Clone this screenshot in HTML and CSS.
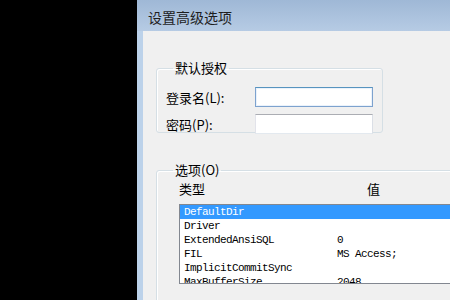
FILE: index.html
```html
<!DOCTYPE html>
<html lang="zh-CN">
<head>
  <meta charset="UTF-8" />
  <title>设置高级选项</title>
  <link rel="stylesheet" href="styles.css">
</head>
<body>
  <div class="window">
    <div class="titlebar">设置高级选项</div>
    <div class="frame">
      <div class="client">

        <fieldset class="group auth">
          <legend>默认授权</legend>
          <div class="field">
            <label for="login">登录名(<u>L</u>):</label>
            <input type="text" id="login" class="focused" />
          </div>
          <div class="field">
            <label for="pwd">密码(<u>P</u>):</label>
            <input type="password" id="pwd" />
          </div>
        </fieldset>

        <fieldset class="group options">
          <legend>选项(<u>O</u>)</legend>
          <div class="list-head">
            <span class="col-type">类型</span>
            <span class="col-value">值</span>
          </div>
          <div class="listbox">
            <div class="item selected"><span class="k">DefaultDir</span><span class="v"></span></div>
            <div class="item"><span class="k">Driver</span><span class="v"></span></div>
            <div class="item"><span class="k">ExtendedAnsiSQL</span><span class="v">0</span></div>
            <div class="item"><span class="k">FIL</span><span class="v">MS Access;</span></div>
            <div class="item"><span class="k">ImplicitCommitSync</span><span class="v"></span></div>
            <div class="item"><span class="k">MaxBufferSize</span><span class="v">2048</span></div>
          </div>
        </fieldset>

      </div>
    </div>
  </div>
</body>
</html>
```

FILE: styles.css
```css
html, body {
  margin: 0;
  height: 100%;
  overflow: hidden;
}

body {
  background-color: #000;
  font-family: "Noto Sans CJK SC", "Liberation Sans", sans-serif;
  color: #000;
}

.window {
  margin-left: 137px;
  height: 300px;
  display: flex;
  flex-direction: column;
  background: #bcd2ea;
}

.titlebar {
  height: 31px;
  padding-left: 11px;
  font-size: 14px;
  line-height: 34px;
  color: #1e1e1e;
  background: linear-gradient(to bottom, #9fb8d6, #b6cbe4);
  flex-shrink: 0;
}

.frame {
  flex: 1;
  padding-left: 6px;
  display: flex;
}

.client {
  flex: 1;
  background-color: #f0f0f0;
  padding: 30px 0 0 13px;
  overflow: hidden;
}

.group {
  margin: 0;
  border: 1px solid #d5dfe5;
  border-radius: 3px;
  box-shadow: inset 1px 1px 0 #fff;
  padding: 0;
}

.group legend {
  font-size: 13px;
  line-height: 14px;
  padding: 0 2px;
  margin-left: 7px;
}

u {
  text-decoration: none;
}

.auth {
  width: 227px;
  height: 72px;
  padding: 12px 0 0 9px;
  box-sizing: border-box;
}

.field {
  display: flex;
  align-items: center;
  height: 20px;
  margin-bottom: 7px;
}

.field label {
  width: 89px;
  font-size: 13px;
}

.field input {
  width: 118px;
  height: 20px;
  box-sizing: border-box;
  border: 1px solid #abadb3;
  border-left-color: #e2e3ea;
  border-right-color: #dbdfe6;
  border-bottom-color: #e3e9ef;
  background: #fff;
  padding: 0 2px;
  outline: none;
}

.field input.focused {
  border-color: #7da2ce;
  border-top-color: #5794bf;
  box-shadow: inset 0 0 0 1px #eaf2fb;
}

.options {
  margin-top: 30px;
  width: 320px;
  height: 150px;
  padding: 4px 0 0 9px;
  box-sizing: border-box;
}

.list-head {
  display: flex;
  margin-left: 13px;
  font-size: 13px;
  line-height: 16px;
  height: 23px;
}

.col-type {
  flex: none;
  width: 188px;
}

.listbox {
  margin-left: 13px;
  background: #fff;
  border: 1px solid #828790;
  height: 78px;
  overflow: hidden;
  font-family: "Liberation Mono", monospace;
  font-size: 11px;
  letter-spacing: -0.6px;
}

.item {
  display: flex;
  height: 14px;
  line-height: 14px;
  padding-left: 4px;
  white-space: nowrap;
}

.item .k {
  flex: none;
  width: 153px;
}

.item.selected {
  background-color: #3399ff;
  color: #fff;
}
```
